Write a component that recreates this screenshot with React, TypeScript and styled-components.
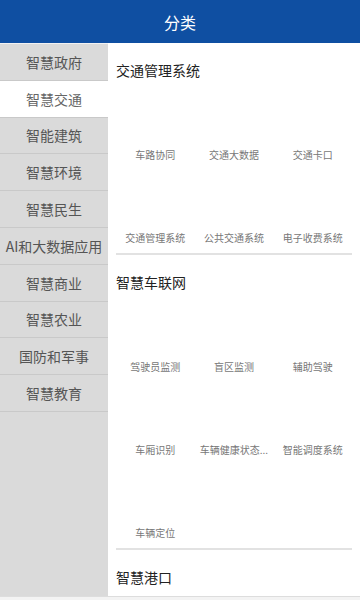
import React, { useState } from 'react'
import styled, { createGlobalStyle } from 'styled-components'

const GlobalStyle = createGlobalStyle`
  html, body {
    margin: 0;
    padding: 0;
    background: #ffffff;
    font-family: "Noto Sans CJK SC", "Noto Sans", sans-serif;
  }
  * {
    box-sizing: border-box;
  }
`

const categories = [
  '智慧政府',
  '智慧交通',
  '智能建筑',
  '智慧环境',
  '智慧民生',
  'AI和大数据应用',
  '智慧商业',
  '智慧农业',
  '国防和军事',
  '智慧教育',
]

interface Section {
  title: string
  items: string[]
}

const sections: Section[] = [
  {
    title: '交通管理系统',
    items: ['车路协同', '交通大数据', '交通卡口', '交通管理系统', '公共交通系统', '电子收费系统'],
  },
  {
    title: '智慧车联网',
    items: ['驾驶员监测', '盲区监测', '辅助驾驶', '车厢识别', '车辆健康状态...', '智能调度系统', '车辆定位'],
  },
  {
    title: '智慧港口',
    items: [],
  },
]

const App: React.FC = () => {
  const [active, setActive] = useState(1)

  return (
    <>
      <GlobalStyle />
      <StyledPage>
        <StyledHeader>
          <StyledTitle>分类</StyledTitle>
        </StyledHeader>
        <StyledBody>
          <StyledSidebar>
            {categories.map((name, i) => (
              <StyledNavItem key={name} active={i === active} onClick={() => setActive(i)}>
                {name}
              </StyledNavItem>
            ))}
          </StyledSidebar>
          <StyledContent>
            {sections.map((section, i) => (
              <StyledSection key={section.title}>
                <StyledSectionTitle>{section.title}</StyledSectionTitle>
                {section.items.length > 0 && (
                  <StyledGrid>
                    {section.items.map((item) => (
                      <StyledCell key={item}>
                        <StyledThumb />
                        <StyledLabel>{item}</StyledLabel>
                      </StyledCell>
                    ))}
                  </StyledGrid>
                )}
                {i < sections.length - 1 && <StyledDivider />}
              </StyledSection>
            ))}
          </StyledContent>
        </StyledBody>
        <StyledBottomEdge />
      </StyledPage>
    </>
  )
}

const StyledPage = styled.div`
  display: flex;
  flex-direction: column;
  width: 360px;
  height: 600px;
  overflow: hidden;
`

const StyledHeader = styled.div`
  display: flex;
  align-items: center;
  justify-content: center;
  height: 43px;
  flex-shrink: 0;
  background: #0f4fa2;
`

const StyledTitle = styled.div`
  color: #ffffff;
  font-size: 16px;
  line-height: 20px;
  padding-top: 1px;
`

const StyledBody = styled.div`
  display: flex;
  flex: 1;
  min-height: 0;
`

const StyledSidebar = styled.div`
  width: 108px;
  flex-shrink: 0;
  background: #dadada;
  border-top: 1px solid #f2f2f2;
  display: flex;
  flex-direction: column;
`

const StyledNavItem = styled.div<{ active?: boolean }>`
  display: flex;
  align-items: center;
  justify-content: center;
  height: 36.8px;
  flex-shrink: 0;
  border-bottom: 1px solid #c9c9c9;
  background: ${(props) => (props.active ? '#ffffff' : '#dadada')};
  color: ${(props) => (props.active ? '#666666' : '#555555')};
  font-size: 14px;
  white-space: nowrap;
  cursor: pointer;
`

const StyledContent = styled.div`
  flex: 1;
  padding: 0 8px;
  background: #ffffff;
  overflow: hidden;
`

const StyledSection = styled.div`
  padding-top: 17px;
`

const StyledSectionTitle = styled.div`
  font-size: 14px;
  line-height: 20px;
  color: #222222;
  margin-bottom: 7px;
`

const StyledGrid = styled.div`
  display: grid;
  grid-template-columns: repeat(3, 1fr);
`

const StyledCell = styled.div`
  display: flex;
  flex-direction: column;
  align-items: center;
  height: 83px;
  padding-bottom: 8px;
`

const StyledThumb = styled.div`
  width: 55px;
  height: 55px;
  margin-bottom: 6px;
  background: #ffffff;
`

const StyledLabel = styled.div`
  font-size: 10px;
  line-height: 14px;
  color: #777777;
  white-space: nowrap;
`

const StyledDivider = styled.div`
  height: 2px;
  background: #e2e2e2;
`

const StyledBottomEdge = styled.div`
  height: 4px;
  flex-shrink: 0;
  background: #f3f3f3;
  border-top: 1px solid #dddddd;
`

export default App
